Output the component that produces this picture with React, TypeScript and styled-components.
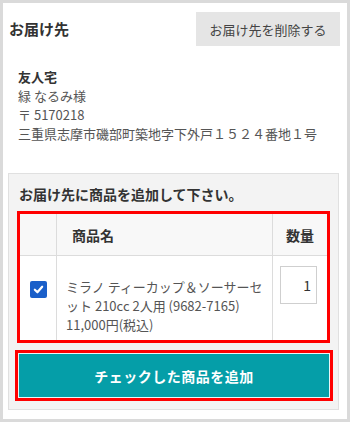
import { FC } from 'react';
import styled, { createGlobalStyle } from 'styled-components';

const GlobalStyle = createGlobalStyle`
  * {
    box-sizing: border-box;
  }

  body {
    margin: 0;
    background: #ffffff;
    font-family: 'Noto Sans CJK JP', 'Noto Sans', sans-serif;
    color: #333;
  }
`;

const Frame = styled.div`
  width: 350px;
  height: 422px;
  border: 3px solid #dadada;
  background: #fff;
  display: flex;
  flex-direction: column;
`;

const Header = styled.div`
  display: flex;
  align-items: center;
  justify-content: space-between;
  padding: 9px 7px 0 6px;
`;

const Title = styled.h2`
  margin: 0;
  font-size: 15px;
  line-height: 20px;
  font-weight: 700;
  color: #333;
`;

const DeleteButton = styled.button`
  width: 144px;
  height: 34px;
  border: none;
  background: #e5e5e5;
  font-family: inherit;
  font-size: 13px;
  color: #444;
  cursor: pointer;
`;

const Address = styled.div`
  margin: 21px 0 0;
  padding-left: 15px;
  font-size: 13px;
  line-height: 19px;
  color: #555;
`;

const AddressName = styled.div`
  font-weight: 700;
  color: #333;
`;

const AddBox = styled.div`
  margin: 30px 8px 0 5px;
  padding: 10px 8px 8px;
  background: #f3f3f3;
  border: 1px solid #e0e0e0;
`;

const AddTitle = styled.div`
  padding-left: 2px;
  font-size: 14px;
  line-height: 20px;
  font-weight: 700;
  color: #333;
`;

const Table = styled.table`
  width: 100%;
  margin-top: 7px;
  border-collapse: collapse;
  border: 3px solid #ff0000;
  background: #fff;
`;

const HeadCell = styled.th<{ $align?: 'left' | 'center' }>`
  height: 43px;
  padding: 0 0 0 ${({ $align }) => ($align === 'left' ? '15px' : '0')};
  text-align: ${({ $align }) => $align ?? 'center'};
  font-size: 14px;
  font-weight: 700;
  color: #333;
  background: #f8f8f8;
  border-bottom: 1px solid #dcdcdc;
  border-left: 1px solid #dcdcdc;

  &:first-child {
    border-left: none;
  }
`;

const Cell = styled.td`
  height: 86px;
  vertical-align: top;
  border-left: 1px solid #dcdcdc;

  &:first-child {
    border-left: none;
  }
`;

const CheckCell = styled(Cell)`
  width: 38px;
  padding-top: 20px;
  text-align: center;
`;

const QtyCell = styled(Cell)`
  width: 56px;
  padding: 10px 0 0 7px;
`;

const Checkbox = styled.span`
  display: inline-flex;
  align-items: center;
  justify-content: center;
  width: 17px;
  height: 17px;
  border-radius: 2px;
  background: #1a5fc9;
`;

const ProductText = styled.div`
  padding: 20px 6px 0 8px;
  font-size: 13px;
  line-height: 19px;
  color: #555;
`;

const QtyInput = styled.input`
  width: 37px;
  height: 38px;
  padding: 0 5px;
  border: 1px solid #cfcfcf;
  background: #fff;
  text-align: right;
  font-family: inherit;
  font-size: 14px;
  color: #333;
`;

const SubmitWrap = styled.div`
  margin: 7px -3px 0 -2px;
  padding: 1px;
  border: 3px solid #ff0000;
  background: #e8f6f7;
`;

const SubmitButton = styled.button`
  display: block;
  width: 100%;
  height: 43px;
  border: none;
  background: #059ea8;
  color: #fff;
  font-family: inherit;
  font-size: 14px;
  font-weight: 700;
  letter-spacing: 0.5px;
  cursor: pointer;
`;

const CheckIcon: FC = () => (
  <svg width='11' height='11' viewBox='0 0 12 12'>
    <path d='M2 6.3 L4.8 9 L10 3' fill='none' stroke='#fff' strokeWidth='2.4' strokeLinecap='round' strokeLinejoin='round' />
  </svg>
);

const App: FC = () => {
  return (
    <>
      <GlobalStyle />
      <Frame>
        <Header>
          <Title>お届け先</Title>
          <DeleteButton type='button'>お届け先を削除する</DeleteButton>
        </Header>
        <Address>
          <AddressName>友人宅</AddressName>
          <div>緑 なるみ様</div>
          <div>〒 5170218</div>
          <div>三重県志摩市磯部町築地字下外戸１５２４番地１号</div>
        </Address>
        <AddBox>
          <AddTitle>お届け先に商品を追加して下さい。</AddTitle>
          <Table>
            <thead>
              <tr>
                <HeadCell />
                <HeadCell $align='left'>商品名</HeadCell>
                <HeadCell>数量</HeadCell>
              </tr>
            </thead>
            <tbody>
              <tr>
                <CheckCell>
                  <Checkbox>
                    <CheckIcon />
                  </Checkbox>
                </CheckCell>
                <Cell>
                  <ProductText>
                    ミラノ ティーカップ＆ソーサーセ
                    <br />
                    ット 210cc 2人用 (9682-7165)
                    <br />
                    11,000円(税込)
                  </ProductText>
                </Cell>
                <QtyCell>
                  <QtyInput type='text' defaultValue='1' />
                </QtyCell>
              </tr>
            </tbody>
          </Table>
          <SubmitWrap>
            <SubmitButton type='button'>チェックした商品を追加</SubmitButton>
          </SubmitWrap>
        </AddBox>
      </Frame>
    </>
  );
};

export default App;
